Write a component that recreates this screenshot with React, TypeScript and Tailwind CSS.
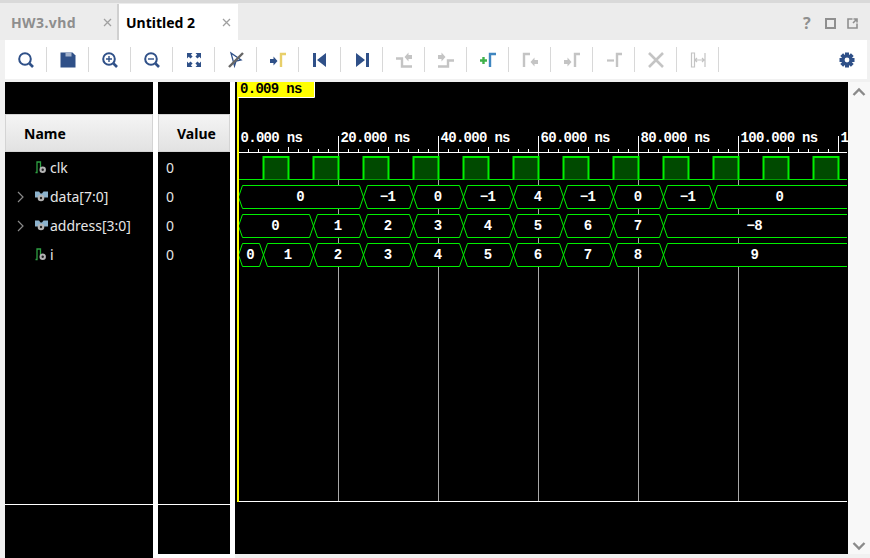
import type { ReactNode } from "react";

const BLUE = "#2f5088";
const GREY = "#c4c4c4";
const X0 = 238.5;
const PX = 5; // px per ns
const RIGHT = 847;

const xOf = (ns: number) => X0 + ns * PX;

const BUSES = [
    { top: 185.5, edges: [0, 25, 35, 45, 55, 65, 75, 85, 95], labels: ["0", "-1", "0", "-1", "4", "-1", "0", "-1", "0"] },
    { top: 214.5, edges: [0, 15, 25, 35, 45, 55, 65, 75, 85], labels: ["0", "1", "2", "3", "4", "5", "6", "7", "-8"] },
    { top: 243.5, edges: [0, 5, 15, 25, 35, 45, 55, 65, 75, 85], labels: ["0", "1", "2", "3", "4", "5", "6", "7", "8", "9"] },
];

const RULER = [0, 20, 40, 60, 80, 100, 120];
const TICKS = Array.from({ length: 61 }, (_, i) => i * 2);
const CLOCK = [0, 10, 20, 30, 40, 50, 60, 70, 80, 90, 100, 110];

function Waveform() {
    return (
        <svg width="613" height="472" viewBox="235 82 613 472" className="block" fontFamily='"Liberation Mono", monospace' fontWeight="700">
            {/* grid lines */}
            {RULER.slice(1, 6).map((ns) => (
                <line key={ns} x1={xOf(ns)} x2={xOf(ns)} y1="152" y2="501" stroke="#a8a8a8" />
            ))}

            {/* ruler */}
            <line x1="239" x2={RIGHT} y1="152.5" y2="152.5" stroke="#fff" />
            {TICKS.filter((ns) => xOf(ns) < RIGHT).map((ns) => (
                <line key={ns} x1={xOf(ns)} x2={xOf(ns)} y1={ns % 10 === 0 ? 147 : 149} y2="152" stroke="#fff" />
            ))}
            {RULER.map((ns) => (
                <g key={ns}>
                    <line x1={xOf(ns)} x2={xOf(ns)} y1="136" y2="152" stroke="#fff" />
                    <text x={xOf(ns) + 2} y="142" fontSize="14" letterSpacing="-0.7" fill="#fff">
                        {ns === 120 ? "1" : `${ns}.000 ns`}
                    </text>
                </g>
            ))}

            {/* clk */}
            <line x1="239" x2={RIGHT} y1="179.5" y2="179.5" stroke="#00f000" />
            {CLOCK.map((ns) => (
                <g key={ns}>
                    <rect x={xOf(ns + 5)} y="157" width="25" height="22.5" fill="#004a00" />
                    <path d={`M${xOf(ns + 5)} 179.5V157H${xOf(ns + 10)}V179.5`} fill="none" stroke="#00f000" strokeWidth="2" />
                </g>
            ))}

            {/* buses */}
            {BUSES.map((bus) => {
                const bottom = bus.top + 23;
                const mid = bus.top + 11.5;
                return (
                    <g key={bus.top}>
                        <rect x="239" y={bus.top - 0.5} width={RIGHT - 239} height="24" fill="#000" />
                        {bus.edges.map((ns, i) => {
                            const a = xOf(ns);
                            const b = i + 1 < bus.edges.length ? xOf(bus.edges[i + 1]) : null;
                            const d = b
                                ? `M${a} ${mid}L${a + 4} ${bus.top}H${b - 4}L${b} ${mid}L${b - 4} ${bottom}H${a + 4}Z`
                                : `M${RIGHT} ${bus.top}H${a + 4}L${a} ${mid}L${a + 4} ${bottom}H${RIGHT}`;
                            return (
                                <g key={ns}>
                                    <path d={d} fill="none" stroke="#00f000" />
                                    <text x={((b ?? RIGHT) + a) / 2 - 1} y={mid + 4} fontSize="14" letterSpacing="-0.7" fill="#fff" textAnchor="middle">
                                        {bus.labels[i].replace("-", "\u2212")}
                                    </text>
                                </g>
                            );
                        })}
                    </g>
                );
            })}

            <line x1="239" x2={RIGHT} y1="501.5" y2="501.5" stroke="#fff" />

            {/* cursor + marker */}
            <rect x="237" y="82" width="2" height="420" fill="#ffff00" />
            <rect x="238" y="82" width="76" height="15" fill="#ffff00" />
            <path d="M314.5 82V97.5H238" fill="none" stroke="#fff" />
            <text x="240" y="93" fontSize="14" letterSpacing="-0.7" fill="#000">0.009 ns</text>
        </svg>
    );
}

function Tab({ label, active }: { label: string; active?: boolean }) {
    return (
        <div className={active ? "flex h-[36px] w-[119px] items-center bg-white pl-[7px] text-black" : "flex h-[36px] w-[114px] items-center border-r-2 border-[#d0d0d0] pl-[6px] text-[#8e8e8e]"}>
            <span className={active ? "flex-1 text-[14px] font-bold" : "flex-1 text-[14px] font-bold tracking-[0.4px]"}>{label}</span>
            <svg width="9" height="9" viewBox="0 0 9 9" className={active ? "mr-[7px]" : "mr-[5px]"}>
                <path d="M1 1l7 7M8 1l-7 7" stroke="#a0a0a0" strokeWidth="1.3" />
            </svg>
        </div>
    );
}

function Tool({ children }: { children?: ReactNode }) {
    return (
        <div className="flex h-[25px] w-[42px] items-center justify-center border-r border-[#d8d8d8]">
            <svg width="24" height="24" viewBox="0 0 24 24" fill="none">
                {children}
            </svg>
        </div>
    );
}

const lens = (
    <>
        <circle cx="11" cy="11" r="5.8" stroke={BLUE} strokeWidth="2" />
        <path d="M15.5 15.5L19 19" stroke={BLUE} strokeWidth="2.6" />
    </>
);

const arrowR = (x: number, y: number, c: string) => <path d={`M${x} ${y - 2}h3.5v-2.5l4 4.5-4 4.5v-2.5h-3.5z`} fill={c} />;
const arrowL = (x: number, y: number, c: string) => <path d={`M${x} ${y - 2}h-3.5v-2.5l-4 4.5 4 4.5v-2.5h3.5z`} fill={c} />;

const TOOLS: ReactNode[] = [
    lens,
    <>
        <path d="M4.5 4.5h12l3 3v12h-15z" fill={BLUE} />
        <path d="M9.5 4.5h6v4h-6z" fill="#a3b2cc" />
    </>,
    <>
        {lens}
        <path d="M8 11h6M11 8v6" stroke={BLUE} strokeWidth="1.4" />
    </>,
    <>
        {lens}
        <path d="M8 11h6" stroke={BLUE} strokeWidth="1.4" />
    </>,
    <path d="M5 5h5.5l-1.7 1.7 1.8 1.8-2.1 2.1-1.8-1.8L5 10.5z M19 5v5.5l-1.7-1.7-1.8 1.8-2.1-2.1 1.8-1.8L13.5 5z M5 19v-5.5l1.7 1.7 1.8-1.8 2.1 2.1-1.8 1.8 1.7 1.7z M19 19h-5.5l1.7-1.7-1.8-1.8 2.1-2.1 1.8 1.8 1.7-1.7z" fill={BLUE} />,
    <>
        <path d="M7 5l10 7-5 1-1.5 5z" stroke={BLUE} strokeWidth="1.3" />
        <path d="M5 19L19 5" stroke="#666" strokeWidth="2.4" />
    </>,
    <>
        {arrowR(4, 13, BLUE)}
        <path d="M15 19V6h5" stroke="#e8cf6a" strokeWidth="2.4" />
    </>,
    <path d="M5 5h3v14H5z M18 5v14L9 12z" fill={BLUE} />,
    <path d="M19 5h-3v14h3z M6 5v14l9-7z" fill={BLUE} />,
    <>
        <path d="M4 10.5h6v8h10" stroke={GREY} strokeWidth="2.4" />
        {arrowL(20, 9, GREY)}
    </>,
    <>
        <path d="M4 18.5h10v-6h6" stroke={GREY} strokeWidth="2.4" />
        {arrowR(4, 9, GREY)}
    </>,
    <>
        <path d="M4 12.5h7M7.5 9v7" stroke="#3fb14a" strokeWidth="2.4" />
        <path d="M14 19V6h6" stroke="#3f86c0" strokeWidth="2.4" />
    </>,
    <>
        <path d="M6 19V6h6" stroke={GREY} strokeWidth="2.4" />
        {arrowL(20, 14, GREY)}
    </>,
    <>
        {arrowR(4, 14, GREY)}
        <path d="M15 19V6h5" stroke={GREY} strokeWidth="2.4" />
    </>,
    <>
        <path d="M5 12.5h7" stroke={GREY} strokeWidth="2.2" />
        <path d="M15 19V6h5" stroke={GREY} strokeWidth="2.4" />
    </>,
    <path d="M5 5l14 14M19 5L5 19" stroke={GREY} strokeWidth="2.6" />,
    <path d="M5.5 5v14h3V5z M19 5v14M9 12h9M11 10l-2 2 2 2M16 10l2 2-2 2" stroke={GREY} strokeWidth="1.2" />,
];

function Gear() {
    const teeth = [0, 45, 90, 135];
    return (
        <svg width="18" height="18" viewBox="0 0 18 18" fill="none">
            {teeth.map((a) => (
                <rect key={a} x="7" y="1.5" width="4" height="15" fill={BLUE} transform={`rotate(${a} 9 9)`} />
            ))}
            <circle cx="9" cy="9" r="5.6" fill={BLUE} />
            <circle cx="9" cy="9" r="2.4" fill="#fff" />
        </svg>
    );
}

function SignalIcon({ bus }: { bus?: boolean }) {
    return (
        <svg width="16" height="16" viewBox="0 0 16 16" fill="none">
            {bus ? (
                <>
                    <path d="M2 2.5h4l1.5 2L9 4.5l1.5-2H15v6H2z" fill="#8cb2cc" />
                    <circle cx="8" cy="9" r="3.3" fill="#b4b4b4" />
                    <circle cx="8" cy="9" r="1.2" fill="#222" />
                </>
            ) : (
                <>
                    <path d="M2.5 12.5H4V2H7.5V8" stroke="#2ea043" strokeWidth="1.3" />
                    <circle cx="9.7" cy="9.7" r="3.2" fill="#b4b4b4" />
                    <circle cx="9.7" cy="9.7" r="1.2" fill="#222" />
                </>
            )}
        </svg>
    );
}

const SIGNALS = [
    { name: "clk", bus: false },
    { name: "data[7:0]", bus: true },
    { name: "address[3:0]", bus: true },
    { name: "i", bus: false },
];

function Pane({ className, label, footer, children }: { className: string; label: string; footer: string; children: ReactNode }) {
    return (
        <div className={`flex flex-col bg-black ${className}`}>
            <div className="h-[32px] shrink-0" />
            <div className="flex h-[38px] shrink-0 items-center border border-[#d4d4d4] bg-gradient-to-b from-[#f4f4f4] to-[#e2e2e2] pl-[18px] text-[14px] font-bold text-black">
                {label}
            </div>
            <div className="flex-1 pt-px">{children}</div>
            <div className="h-px bg-white" />
            <div className={`shrink-0 ${footer}`} />
        </div>
    );
}

export default function App() {
    return (
        <div className="flex h-[558px] w-[870px] flex-col overflow-hidden bg-[#f1f1f1] font-['Noto_Sans',sans-serif]">
            <div className="h-[3px] bg-[#d9d9d9]" />

            {/* tabs */}
            <div className="flex h-[37px] shrink-0 items-end bg-[#ececec] pl-[5px]">
                <Tab label="HW3.vhd" />
                <Tab label="Untitled 2" active />
                <div className="mb-[9px] ml-auto mr-[12px] flex items-center gap-[11px] text-[#8f8f8f]">
                    <span className="w-[11px] text-[16px] font-bold leading-none">?</span>
                    <div className="h-[11px] w-[11px] border-2 border-[#8f8f8f]" />
                    <svg width="11" height="11" viewBox="0 0 11 11" fill="none">
                        <path d="M5.5 1H1V10H10V5.5M6.5 1H10V4.5M10 1L6 5" stroke="#8f8f8f" strokeWidth="1.6" />
                    </svg>
                </div>
            </div>

            {/* toolbar */}
            <div className="ml-[5px] mr-[3px] flex h-[39px] shrink-0 items-center bg-white">
                {TOOLS.map((icon, i) => (
                    <Tool key={i}>{icon}</Tool>
                ))}
                <div className="ml-auto mr-[11px] flex items-center">
                    <Gear />
                </div>
            </div>

            {/* panes */}
            <div className="mt-[3px] flex h-[476px] pl-[5px]">
                <div className="flex h-[476px] bg-white">
                    <Pane className="h-[476px] w-[148px]" label="Name" footer="h-[53px]">
                        {SIGNALS.map((s) => (
                            <div key={s.name} className="flex h-[29px] items-center text-[14px] text-[#e6e6e6]">
                                <div className="flex w-[28px] pl-[12px]">
                                    {s.bus && (
                                        <svg width="8" height="12" viewBox="0 0 8 12" fill="none">
                                            <path d="M1 1l5 5-5 5" stroke="#8a8a8a" strokeWidth="1.2" />
                                        </svg>
                                    )}
                                </div>
                                <SignalIcon bus={s.bus} />
                                <span className="ml-[1px]">{s.name}</span>
                            </div>
                        ))}
                    </Pane>
                    <div className="w-[5px]" />
                    <Pane className="h-[472px] w-[72px]" label="Value" footer="h-[49px]">
                        {SIGNALS.map((s) => (
                            <div key={s.name} className="flex h-[29px] items-center pl-[8px] text-[14px] text-[#e6e6e6]">
                                0
                            </div>
                        ))}
                    </Pane>
                    <div className="w-[5px]" />
                </div>

                <div className="h-[472px] w-[613px] bg-black">
                    <Waveform />
                </div>

                {/* scrollbar */}
                <div className="flex h-[472px] w-[22px] flex-col items-center justify-between bg-[#f8f8f8] pb-[3px] pt-[5px]">
                    <svg width="14" height="10" viewBox="0 0 14 10" fill="none">
                        <path d="M1.5 8L7 2.5 12.5 8" stroke="#8a8a8a" strokeWidth="2.4" />
                    </svg>
                    <svg width="14" height="10" viewBox="0 0 14 10" fill="none">
                        <path d="M1.5 2L7 7.5 12.5 2" stroke="#8a8a8a" strokeWidth="2.4" />
                    </svg>
                </div>
            </div>
        </div>
    );
}
